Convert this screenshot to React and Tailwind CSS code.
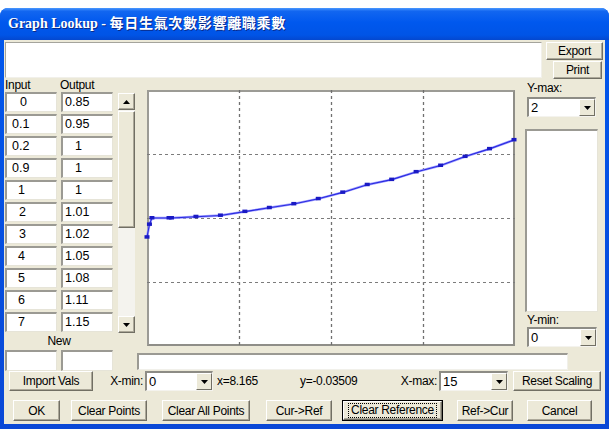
import React from "react";

const inputs = ["0", "0.1", "0.2", "0.9", "1", "2", "3", "4", "5", "6", "7"];
const inPl = ["pl-[13px]", "pl-[5px]", "pl-[5px]", "pl-[5px]", "pl-[11px]", "pl-[12px]", "pl-[12px]", "pl-[11px]", "pl-[11px]", "pl-[11px]", "pl-[11px]"];
const outputs = ["0.85", "0.95", "1", "1", "1", "1.01", "1.02", "1.05", "1.08", "1.11", "1.15"];
const outPl = ["pl-[2px]", "pl-[2px]", "pl-[12px]", "pl-[12px]", "pl-[12px]", "pl-[2px]", "pl-[2px]", "pl-[2px]", "pl-[2px]", "pl-[2px]", "pl-[2px]"];

const data = [
  [0, 0.85], [0.1, 0.95], [0.2, 1], [0.9, 1], [1, 1], [2, 1.01], [3, 1.02], [4, 1.05],
  [5, 1.08], [6, 1.11], [7, 1.15], [8, 1.2], [9, 1.26], [10, 1.3], [11, 1.36],
  [12, 1.41], [13, 1.48], [14, 1.54], [15, 1.61],
];
const px = (x) => (x / 15) * 367;
const py = (y) => 256 - y * 128;

function Btn({ className = "", children, focused = false }) {
  return (
    <div className={`flex bg-[#ece9d8] text-[12px] tracking-[-0.3px] text-black leading-none ${focused ? "border border-black" : ""} ${className}`}>
      <div className="flex-1 flex items-center justify-center border border-t-white border-l-white border-r-[#716f64] border-b-[#716f64] shadow-[inset_-1px_-1px_0_#aca899]">
        {focused ? (
          <span className="border border-dotted border-black px-[2px] py-[1px] leading-[11px]">{children}</span>
        ) : (
          children
        )}
      </div>
    </div>
  );
}

function DownTri() {
  return (
    <svg width="7" height="4" viewBox="0 0 7 4">
      <polygon points="0,0 7,0 3.5,4" fill="#000" />
    </svg>
  );
}

function UpTri() {
  return (
    <svg width="7" height="4" viewBox="0 0 7 4">
      <polygon points="0,4 7,4 3.5,0" fill="#000" />
    </svg>
  );
}

function Combo({ value, className = "" }) {
  return (
    <div className={`flex bg-white border-t-2 border-l-2 border-t-[#8d8c85] border-l-[#8d8c85] border-b border-r border-b-[#f4f3ee] border-r-[#f4f3ee] ${className}`}>
      <div className="flex-1 pl-[2px] text-[13px] leading-[17px] text-black">{value}</div>
      <div className="w-[16px] flex items-center justify-center bg-[#ece9d8] border border-t-white border-l-white border-r-[#716f64] border-b-[#716f64]">
        <DownTri />
      </div>
    </div>
  );
}

function Cell({ v, pl }) {
  return (
    <div className={`w-[52px] h-[20px] bg-white border-t-2 border-l-2 border-t-[#9b9a93] border-l-[#9b9a93] border-b border-r border-b-[#e6e4d8] border-r-[#e6e4d8] flex items-center text-[12.5px] leading-none text-black ${pl}`}>
      {v}
    </div>
  );
}

function Graph() {
  const pts = data.map(([x, y]) => `${px(x)},${py(y)}`).join(" ");
  return (
    <div className="mt-[11px] ml-[12px] w-[368px] h-[256px] bg-white border-2 border-t-[#9c9b95] border-l-[#9c9b95] border-b-[#8f8e88] border-r-[#8f8e88]">
      <svg width="364" height="252" viewBox="2 2 364 252" className="overflow-visible block">
        {[92.5, 184.5, 276.5].map((x) => (
          <line key={x} x1={x} y1={0} x2={x} y2={256} stroke="#707070" strokeWidth="1.3" strokeDasharray="3 3" />
        ))}
        {[64.5, 128.5, 192.5].map((y) => (
          <line key={y} x1={0} y1={y} x2={368} y2={y} stroke="#7c7c7c" strokeWidth="1" strokeDasharray="3 3" />
        ))}
        <polyline points={pts} fill="none" stroke="#9c9cff" strokeWidth="2.4" />
        <polyline points={pts} fill="none" stroke="#2a2ae0" strokeWidth="1.1" />
        {data.map(([x, y], i) => (
          <rect key={i} x={px(x) - 2.5} y={py(y) - 2} width="5" height="3.5" fill="#1a1ac4" />
        ))}
      </svg>
    </div>
  );
}

export default function App() {
  return (
    <div className="w-[609px] h-[429px] bg-white pt-[8px] overflow-hidden font-['Liberation_Sans',Arial,sans-serif]">
      <div className="h-[421px] flex flex-col rounded-t-[8px] bg-[linear-gradient(to_bottom,#0058ee,#0a48d6)]">
        {/* title bar */}
        <div className="h-[32px] flex items-center pl-[8px] rounded-t-[8px] bg-[linear-gradient(to_bottom,#4a98ff_0%,#1266f0_10%,#0058ee_45%,#0054e6_85%,#0448cf_100%)]">
          <span className="text-white font-bold text-[14px] leading-none font-['Liberation_Serif','Noto_Sans_CJK_TC',serif] [text-shadow:1px_1px_0_#0a2a8a] whitespace-nowrap">
            Graph Lookup -{" "}
            <span className="tracking-[0.7px]">每日生氣次數影響離職乘數</span>
          </span>
        </div>

        {/* body */}
        <div className="mx-[4px] mb-[5px] flex-1 bg-[#ece9d8] flex flex-col text-black">
          {/* row A */}
          <div className="mt-[2px] h-[37px] flex">
            <div className="ml-[1px] w-[537px] h-[36px] bg-white border border-t-[#a5a49c] border-l-[#a5a49c] border-b-[#f1f0ea] border-r-[#f1f0ea]" />
            <div className="ml-[4px] w-[57px] flex flex-col gap-[1px]">
              <Btn className="h-[18px]">Export</Btn>
              <Btn className="h-[19px] ml-[7px] w-[49px]">Print</Btn>
            </div>
          </div>

          {/* main */}
          <div className="flex h-[292px]">
            {/* left column */}
            <div className="ml-[1px] w-[108px] flex flex-col">
              <div className="h-[12px] flex text-[12px] leading-[12px] tracking-[-0.3px]">
                <span className="w-[55px]">Input</span>
                <span>Output</span>
              </div>
              <div className="mt-[1px] flex flex-col gap-[2px]">
                {inputs.map((v, i) => (
                  <div key={i} className="flex gap-[4px]">
                    <Cell v={v} pl={inPl[i]} />
                    <Cell v={outputs[i]} pl={outPl[i]} />
                  </div>
                ))}
              </div>
              <div className="mt-[2px] h-[14px] flex items-center justify-center text-[12px] leading-none tracking-[-0.3px]">New</div>
              <div className="mt-[2px] flex gap-[4px]">
                <div className="w-[52px] h-[21px] bg-white border-t-2 border-l-2 border-t-[#9b9a93] border-l-[#9b9a93] border-b border-r border-b-[#e6e4d8] border-r-[#e6e4d8]" />
                <div className="w-[52px] h-[21px] bg-white border-t-2 border-l-2 border-t-[#9b9a93] border-l-[#9b9a93] border-b border-r border-b-[#e6e4d8] border-r-[#e6e4d8]" />
              </div>
            </div>

            {/* right part */}
            <div className="ml-[5px] flex flex-col">
              <div className="flex h-[274px]">
                {/* scrollbar */}
                <div className="mt-[14px] w-[17px] h-[240px] flex flex-col bg-[#f4f3ee]">
                  <div className="h-[17px] flex items-center justify-center bg-[#ece9d8] border border-t-white border-l-white border-r-[#716f64] border-b-[#716f64] shadow-[inset_-1px_-1px_0_#aca899]">
                    <UpTri />
                  </div>
                  <div className="mt-[1px] h-[117px] bg-[#ece9d8] border border-t-white border-l-white border-r-[#716f64] border-b-[#716f64] shadow-[inset_-1px_-1px_0_#aca899]" />
                  <div className="flex-1" />
                  <div className="h-[17px] flex items-center justify-center bg-[#ece9d8] border border-t-white border-l-white border-r-[#716f64] border-b-[#716f64] shadow-[inset_-1px_-1px_0_#aca899]">
                    <DownTri />
                  </div>
                </div>

                <Graph />

                {/* right panel */}
                <div className="ml-[10px] w-[73px] flex flex-col">
                  <div className="mt-[2px] h-[14px] pl-[2px] text-[12px] leading-[14px] tracking-[-0.3px]">Y-max:</div>
                  <Combo value="2" className="mt-[2px] ml-[2px] w-[69px] h-[20px]" />
                  <div className="mt-[12px] w-[73px] h-[183px] bg-white border-t-2 border-l-2 border-t-[#9b9a93] border-l-[#9b9a93] border-b border-r border-b-[#e6e4d8] border-r-[#e6e4d8]" />
                  <div className="mt-[1px] h-[14px] pl-[2px] text-[12px] leading-[14px] tracking-[-0.3px]">Y-min:</div>
                  <Combo value="0" className="ml-[2px] w-[70px] h-[20px]" />
                </div>
              </div>
              <div className="ml-[19px] w-[431px] h-[17px] bg-white border-t-2 border-l-2 border-t-[#9b9a93] border-l-[#9b9a93] border-b border-r border-b-[#f1f0ea] border-r-[#f1f0ea]" />
            </div>
          </div>

          {/* row 1 */}
          <div className="h-[20px] flex items-center text-[12px] tracking-[-0.3px] leading-none">
            <Btn className="ml-[5px] w-[84px] h-[20px]">Import Vals</Btn>
            <span className="ml-[13px] w-[37px] text-right">X-min:</span>
            <Combo value="0" className="ml-[2px] w-[68px] h-[20px] tracking-normal" />
            <span className="ml-[4px] w-[83px]">x=8.165</span>
            <span className="w-[98px]">y=-0.03509</span>
            <span className="w-[39px] text-right">X-max:</span>
            <Combo value="15" className="ml-[2px] w-[69px] h-[20px] tracking-normal" />
            <Btn className="ml-[5px] w-[88px] h-[20px]">Reset Scaling</Btn>
          </div>

          {/* row 2 */}
          <div className="mt-[9px] h-[21px] flex">
            <Btn className="ml-[9px] w-[47px]">OK</Btn>
            <Btn className="ml-[11px] w-[76px]">Clear Points</Btn>
            <Btn className="ml-[15px] w-[88px]">Clear All Points</Btn>
            <Btn className="ml-[16px] w-[66px]">Cur-&gt;Ref</Btn>
            <Btn className="ml-[10px] w-[101px]" focused>Clear Reference</Btn>
            <Btn className="ml-[14px] w-[56px]">Ref-&gt;Cur</Btn>
            <Btn className="ml-[14px] w-[65px]">Cancel</Btn>
          </div>
        </div>
      </div>
    </div>
  );
}
